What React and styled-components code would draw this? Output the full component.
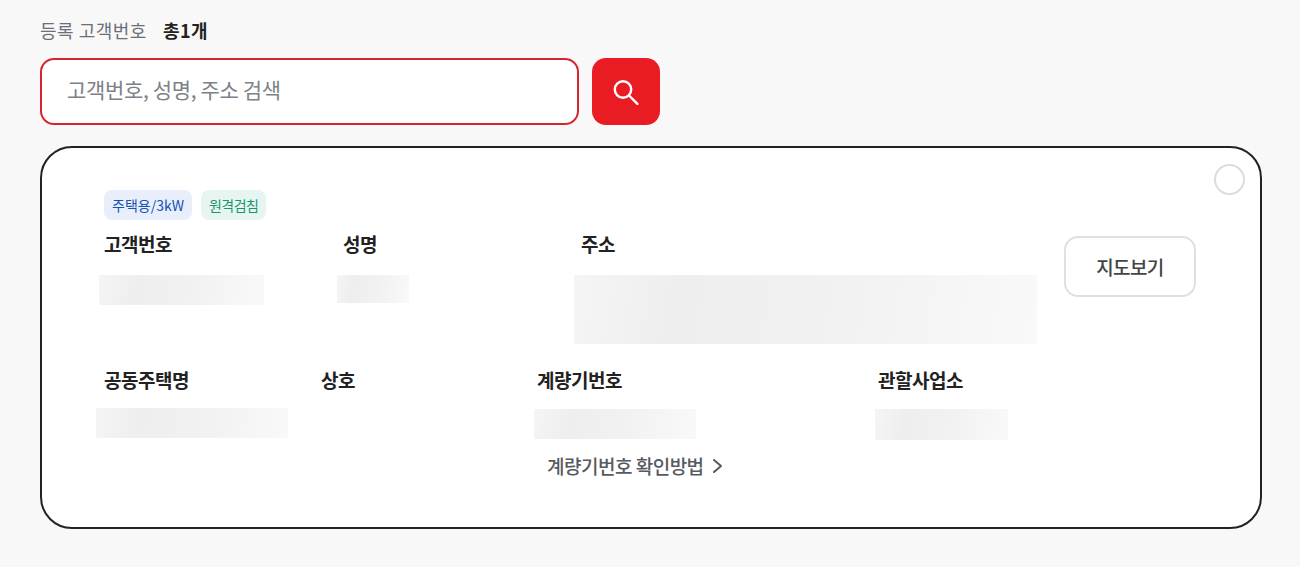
import React from "react";
import styled, { createGlobalStyle } from "styled-components";

const GlobalStyle = createGlobalStyle`
  * {
    box-sizing: border-box;
  }
  html, body {
    margin: 0;
    padding: 0;
    background: #f8f8f8;
    font-family: "Noto Sans CJK KR", "Noto Sans", sans-serif;
  }
`;

const Page = styled.div`
  width: 1300px;
  height: 567px;
  padding: 17px 38px 0 40px;
  overflow: hidden;
`;

const CountRow = styled.div`
  display: flex;
  align-items: center;
  gap: 16px;
  height: 26px;
  font-size: 18px;
  letter-spacing: 0.5px;
`;

const CountLabel = styled.span`
  color: #6b7078;
`;

const CountValue = styled.strong`
  color: #222;
  font-weight: 700;
`;

const SearchRow = styled.form`
  display: flex;
  gap: 13px;
  margin-top: 15px;
`;

const SearchInput = styled.input`
  width: 539px;
  height: 67px;
  padding: 0 25px 5px;
  border: 2px solid #d7252f;
  border-radius: 14px;
  background: #fff;
  outline: none;
  font-family: inherit;
  font-size: 21px;
  letter-spacing: -0.35px;
  &::placeholder {
    color: #7c8188;
    opacity: 1;
  }
`;

const SearchButton = styled.button`
  display: flex;
  align-items: center;
  justify-content: center;
  width: 68px;
  height: 67px;
  padding: 0;
  border: 0;
  border-radius: 14px;
  background: #e91c24;
`;

const Card = styled.section`
  position: relative;
  width: 1222px;
  height: 383px;
  margin-top: 21px;
  padding: 42px 64px 0 62px;
  border: 2px solid #222;
  border-radius: 32px;
  background: #fff;
`;

const Radio = styled.span`
  position: absolute;
  top: 16px;
  right: 15px;
  width: 31px;
  height: 31px;
  border: 2px solid #d9dde3;
  border-radius: 50%;
  background: #fff;
`;

const Tags = styled.div`
  display: flex;
  gap: 9px;
`;

const Tag = styled.span`
  display: flex;
  align-items: center;
  height: 30px;
  padding: 0 8px;
  border-radius: 8px;
  font-size: 14px;
  letter-spacing: ${({ $tone }) => ($tone === "green" ? "-0.5px" : "0")};
  color: ${({ $tone }) => ($tone === "green" ? "#16966f" : "#1651b8")};
  background: ${({ $tone }) => ($tone === "green" ? "#e7f5f0" : "#e8effb")};
`;

const TopFields = styled.div`
  display: grid;
  grid-template-columns: 239px 238px 483px 1fr;
  margin-top: 11px;
  height: 125px;
`;

const BottomFields = styled.div`
  display: grid;
  grid-template-columns: 217px 216px 341px 1fr;
  margin-top: 11px;
`;

const Field = styled.div`
  min-width: 0;
`;

const Label = styled.div`
  height: 26px;
  font-size: 19px;
  line-height: 26px;
  font-weight: 700;
  letter-spacing: -0.5px;
  color: #222;
`;

const Masked = styled.div`
  width: ${({ $w }) => $w}px;
  height: ${({ $h }) => $h}px;
  margin-top: ${({ $top }) => $top}px;
  margin-left: ${({ $left }) => $left}px;
  background: linear-gradient(100deg, #f5f5f5 0%, #eeeeee 22%, #f1f1f1 55%, #f9f9f9 100%);
`;

const MapButton = styled.button`
  justify-self: end;
  align-self: start;
  width: 132px;
  height: 61px;
  margin-top: 5px;
  padding: 0;
  border: 2px solid #dde1e6;
  border-radius: 14px;
  background: #fff;
  font-family: inherit;
  font-size: 19px;
  font-weight: 500;
  letter-spacing: -0.6px;
  color: #444;
`;

const GuideLink = styled.a`
  display: flex;
  align-items: center;
  gap: 8px;
  width: 180px;
  margin: 13px 0 0 443px;
  font-size: 19px;
  line-height: 26px;
  font-weight: 500;
  letter-spacing: -0.5px;
  color: #565a60;
  white-space: nowrap;
`;

const App = () => {
  return (
    <Page>
      <GlobalStyle />
      <CountRow>
        <CountLabel>등록 고객번호</CountLabel>
        <CountValue>총1개</CountValue>
      </CountRow>
      <SearchRow>
        <SearchInput placeholder="고객번호, 성명, 주소 검색" />
        <SearchButton type="button" aria-label="검색">
          <svg width="26" height="26" viewBox="0 0 26 26" fill="none" stroke="#fff" strokeWidth="2.4" strokeLinecap="round">
            <circle cx="10" cy="10.5" r="8.2" />
            <path d="M16 16.5 L24.4 24.8" />
          </svg>
        </SearchButton>
      </SearchRow>
      <Card>
        <Radio />
        <Tags>
          <Tag>주택용/3kW</Tag>
          <Tag $tone="green">원격검침</Tag>
        </Tags>
        <TopFields>
          <Field>
            <Label>고객번호</Label>
            <Masked $w={165} $h={30} $top={18} $left={-5} />
          </Field>
          <Field>
            <Label>성명</Label>
            <Masked $w={72} $h={28} $top={18} $left={-6} />
          </Field>
          <Field>
            <Label>주소</Label>
            <Masked $w={463} $h={69} $top={18} $left={-7} />
          </Field>
          <MapButton type="button">지도보기</MapButton>
        </TopFields>
        <BottomFields>
          <Field>
            <Label>공동주택명</Label>
            <Masked $w={192} $h={30} $top={15} $left={-8} />
          </Field>
          <Field>
            <Label>상호</Label>
          </Field>
          <Field>
            <Label>계량기번호</Label>
            <Masked $w={162} $h={30} $top={16} $left={-3} />
          </Field>
          <Field>
            <Label>관할사업소</Label>
            <Masked $w={133} $h={31} $top={16} $left={-3} />
          </Field>
        </BottomFields>
        <GuideLink>
          계량기번호 확인방법
          <svg width="11" height="16" viewBox="0 0 11 16" fill="none" stroke="#565a60" strokeWidth="2" strokeLinecap="round" strokeLinejoin="round">
            <path d="M2 2 L9 8 L2 14" />
          </svg>
        </GuideLink>
      </Card>
    </Page>
  );
};

export default App;
